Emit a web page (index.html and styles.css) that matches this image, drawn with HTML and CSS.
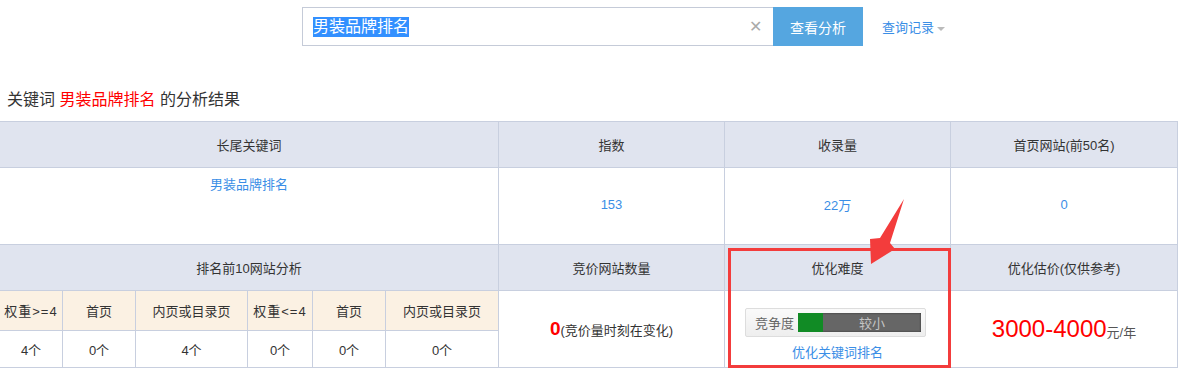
FILE: index.html
```html
<!DOCTYPE html>
<html lang="zh-CN">
<head>
    <meta charset="UTF-8">
    <title>关键词分析</title>
    <link rel="stylesheet" href="styles.css">
</head>
<body>
    <div class="search-bar">
        <div class="search-input">
            <span class="selected">男装品牌排名</span>
            <span class="clear">&#x2715;</span>
        </div>
        <button class="search-btn">查看分析</button>
        <a class="history" href="#">查询记录<span class="caret"></span></a>
    </div>

    <h2 class="result-title">关键词 <span class="kw">男装品牌排名</span> 的分析结果</h2>

    <div class="result-wrap">
        <table class="result">
            <tr class="head">
                <th class="c1">长尾关键词</th>
                <th class="c2">指数</th>
                <th class="c3">收录量</th>
                <th class="c4">首页网站(前50名)</th>
            </tr>
            <tr class="data">
                <td class="top"><a href="#">男装品牌排名</a></td>
                <td class="mid"><a href="#">153</a></td>
                <td class="mid"><a href="#">22万</a></td>
                <td class="mid"><a href="#">0</a></td>
            </tr>
            <tr class="head">
                <th>排名前10网站分析</th>
                <th>竞价网站数量</th>
                <th>优化难度</th>
                <th>优化估价(仅供参考)</th>
            </tr>
            <tr class="data">
                <td class="nested">
                    <table class="sub">
                        <tr class="sub-head">
                            <td class="s1"><span class="op">权重&gt;=4</span></td>
                            <td class="s2">首页</td>
                            <td class="s3">内页或目录页</td>
                            <td class="s4"><span class="op">权重&lt;=4</span></td>
                            <td class="s5">首页</td>
                            <td>内页或目录页</td>
                        </tr>
                        <tr class="sub-row">
                            <td>4个</td>
                            <td>0个</td>
                            <td>4个</td>
                            <td>0个</td>
                            <td>0个</td>
                            <td>0个</td>
                        </tr>
                    </table>
                </td>
                <td><span class="zero">0</span>(竞价量时刻在变化)</td>
                <td class="difficulty">
                    <div class="compete">
                        <span class="compete-label">竞争度</span>
                        <div class="meter">
                            <div class="meter-fill"></div>
                            <span class="meter-text">较小</span>
                        </div>
                    </div>
                    <a class="optimize" href="#">优化关键词排名</a>
                </td>
                <td class="price"><span class="price-num">3000-4000</span>元/年</td>
            </tr>
        </table>

        <div class="highlight"></div>
        <svg class="arrow" width="40" height="70" viewBox="866 196 40 70">
            <polygon points="904,199 890,243 895,249 871,264 870,239 880,238" fill="#f33c3c"/>
        </svg>
    </div>
</body>
</html>
```

FILE: styles.css
```css
body {
    margin: 0;
    font-family: "Liberation Sans", "Noto Sans CJK SC", sans-serif;
    font-size: 13px;
    color: #333;
    background: #fff;
}
a {
    color: #3a8ee6;
    text-decoration: none;
}

/* search */
.search-bar {
    display: flex;
    align-items: center;
    padding: 7px 0 0 302px;
    height: 39px;
}
.search-input {
    box-sizing: border-box;
    width: 471px;
    height: 39px;
    border: 1px solid #c5cbd8;
    border-right: none;
    display: flex;
    align-items: center;
    padding-left: 10px;
}
.selected {
    background: #3390ff;
    color: #fff;
    font-size: 16px;
    line-height: 20px;
}
.clear {
    margin-left: auto;
    margin-right: 11px;
    color: #aaa;
    font-size: 16px;
}
.search-btn {
    width: 90px;
    height: 39px;
    border: none;
    background: #55a6e0;
    color: #fff;
    font-family: inherit;
    font-size: 14px;
    cursor: pointer;
}
.history {
    margin-left: 19px;
    font-size: 13px;
}
.caret {
    display: inline-block;
    margin-left: 3px;
    vertical-align: middle;
    border-left: 4px solid transparent;
    border-right: 4px solid transparent;
    border-top: 4px solid #bbb;
}

.result-title {
    margin: 44px 0 0 7px;
    font-size: 16px;
    font-weight: normal;
    line-height: 20px;
    color: #333;
}
.kw {
    color: #f00;
}

/* result table */
.result-wrap {
    position: relative;
    margin-top: 11px;
    width: 1178px;
}
.result {
    width: 1178px;
    border-collapse: collapse;
    table-layout: fixed;
}
.result th,
.result td {
    border: 1px solid #c8cfdf;
    text-align: center;
    padding: 0;
}
.result tr > :first-child {
    border-left: none;
}
.result .head {
    height: 46px;
}
.result th {
    background: #e0e4ef;
    font-weight: normal;
    color: #333;
}
.result .c1 { width: 498px; }
.result .c2 { width: 225px; }
.result .c3 { width: 225px; }
.result .data {
    height: 77px;
}
.result td.top {
    vertical-align: top;
    padding-top: 6px;
}
.result td.mid {
    padding-bottom: 4px;
}
.result td.nested {
    vertical-align: top;
}

.sub {
    width: 100%;
    border-collapse: collapse;
    table-layout: fixed;
}
.sub td {
    border: none;
    border-right: 1px solid #c8cfdf;
    text-align: center;
}
.sub td:last-child {
    border-right: none;
}
.sub .s1 { width: 62px; }
.sub .s2 { width: 72px; }
.sub .s3 { width: 111px; }
.sub .s4 { width: 64px; }
.sub .s5 { width: 72px; }
.op {
    letter-spacing: 1px;
}
.sub-head td {
    background: #fbf1e3;
    height: 39px;
    border-bottom: 1px solid #c8cfdf;
}
.sub-row td {
    height: 36px;
}

.zero {
    color: #f00;
    font-size: 19px;
    font-weight: bold;
}

.result td.difficulty {
    vertical-align: top;
    padding-top: 17px;
}
.compete {
    box-sizing: border-box;
    width: 181px;
    height: 29px;
    margin: 0 auto;
    display: flex;
    align-items: center;
    border: 1px solid #ddd;
    border-radius: 2px;
    background: linear-gradient(#fafafa, #eee);
    padding: 0 4px 0 9px;
    position: relative;
    left: -2px;
}
.compete-label {
    color: #666;
    width: 43px;
    text-align: left;
}
.meter {
    flex: 1;
    height: 19px;
    background: #666;
    box-shadow: inset 0 0 2px #222;
    display: flex;
    align-items: center;
}
.meter-fill {
    width: 25px;
    height: 100%;
    background: #118b25;
}
.meter-text {
    flex: 1;
    text-align: center;
    color: #c4c4c4;
}
.optimize {
    display: block;
    margin-top: 7px;
    line-height: 17px;
}

.price {
    color: #555;
}
.price-num {
    color: #f00;
    font-size: 24px;
}

.highlight {
    position: absolute;
    left: 728px;
    top: 127px;
    width: 217px;
    height: 114px;
    border: 3px solid #f33c3c;
}
.arrow {
    position: absolute;
    left: 866px;
    top: 75px;
}
```
